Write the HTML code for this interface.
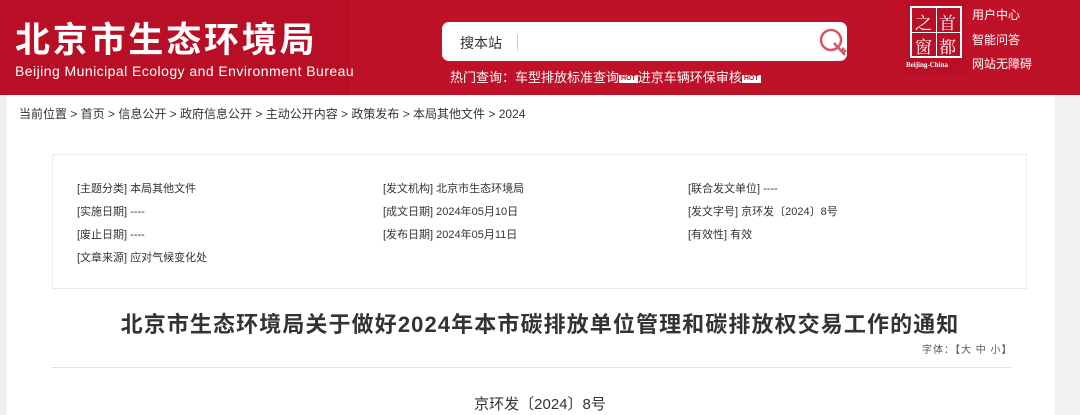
<!DOCTYPE html>
<html><head><meta charset="utf-8"><style>
*{margin:0;padding:0;box-sizing:border-box}
body{width:1080px;height:415px;overflow:hidden;background:#f1f1f1;font-family:"Liberation Sans","Noto Sans CJK SC",sans-serif;position:relative}
.hd{position:absolute;left:0;top:0;width:1080px;height:95px;background:#bf1229}
.hd .dark{position:absolute;left:0;top:0;width:350px;height:95px;background:#b90f26}
.t1{position:absolute;left:15px;top:12px;color:#fff;font-size:35px;font-weight:bold;letter-spacing:2.8px;white-space:nowrap}
.t2{position:absolute;left:15px;top:63px;color:#fff;font-size:14px;white-space:nowrap;letter-spacing:0.45px}
.sb{position:absolute;left:442px;top:22px;width:405px;height:39px;background:#fff;border-radius:7px}
.sb span{position:absolute;left:18px;top:11px;font-size:14px;color:#333}
.sb i{position:absolute;left:75px;top:12px;width:1px;height:17px;background:#ccc}
.hot{position:absolute;left:450px;top:67px;color:#fff;font-size:13px;white-space:nowrap}
.hot b{display:inline-block;background:#fff;color:#bf1229;font-size:7px;line-height:8px;padding:0 2px;vertical-align:middle;font-weight:bold}
.logo{position:absolute;left:905px;top:0;width:62px;height:75px;background:#b80f26}
.logo .bx{position:absolute;left:5px;top:6px;width:52px;height:52px;border:2px solid #fff}
.logo .bx span{position:absolute;color:#fff;font-size:17px;font-family:"Noto Serif CJK SC",serif;line-height:17px}
.logo .c{position:absolute;left:1px;top:61px;font-size:7px;color:#fff;font-family:"Liberation Serif",serif;font-weight:bold;white-space:nowrap}
.rl{position:absolute;left:972px;color:#fff;font-size:12px}
.main{position:absolute;left:7px;top:95px;width:1048px;height:320px;background:#fff}
.bc{position:absolute;left:19px;top:105px;font-size:12px;color:#333;white-space:nowrap}
.box{position:absolute;left:52px;top:154px;width:975px;height:135px;border:1px solid #ecebe4;background:#fff}
.box div{position:absolute;font-size:11px;color:#333;white-space:nowrap}
h1{position:absolute;left:0;width:1080px;text-align:center;top:307px;font-size:22px;color:#333;font-weight:bold;letter-spacing:1.1px}
.zt{position:absolute;left:922px;top:341px;font-size:10px;color:#555;letter-spacing:1px}
.dl{position:absolute;left:52px;top:367px;width:960px;border-top:1px dotted #ccc}
.wh{position:absolute;left:0;width:1080px;text-align:center;top:393px;font-size:15px;color:#333}
</style></head><body>
<div class="hd"><div class="dark"></div>
<div class="t1">北京市生态环境局</div>
<div class="t2">Beijing Municipal Ecology and Environment Bureau</div>
<div class="sb"><span>搜本站</span><i></i>
<svg style="position:absolute;left:375px;top:5px" width="34" height="32" viewBox="0 0 34 32"><circle cx="14" cy="13" r="10" fill="none" stroke="#d7576a" stroke-width="2.5"/><path d="M17 16 L28 28 M24 24 L27 21 M26 26 L29 23" stroke="#d7576a" stroke-width="2.5" fill="none"/></svg></div>
<div class="hot">热门查询：车型排放标准查询<b>HOT</b>进京车辆环保审核<b>HOT</b></div>
<div class="logo"><div class="bx"><span style="left:3px;top:5px">之</span><span style="left:27px;top:5px">首</span><span style="left:3px;top:29px">窗</span><span style="left:27px;top:29px">都</span>
<i style="position:absolute;left:24px;top:0;width:1px;height:48px;background:#fff"></i><i style="position:absolute;left:0;top:24px;width:48px;height:1px;background:#fff"></i></div>
<div class="c">Beijing-China</div></div>
<div class="rl" style="top:6px">用户中心</div>
<div class="rl" style="top:31px">智能问答</div>
<div class="rl" style="top:55px">网站无障碍</div>
</div>
<div class="main"></div>
<div class="bc">当前位置 &gt; 首页 &gt; 信息公开 &gt; 政府信息公开 &gt; 主动公开内容 &gt; 政策发布 &gt; 本局其他文件 &gt; 2024</div>
<div class="box">
<div style="left:24px;top:25px">[主题分类] 本局其他文件</div>
<div style="left:24px;top:48px">[实施日期] ----</div>
<div style="left:24px;top:71px">[废止日期] ----</div>
<div style="left:24px;top:94px">[文章来源] 应对气候变化处</div>
<div style="left:330px;top:25px">[发文机构] 北京市生态环境局</div>
<div style="left:330px;top:48px">[成文日期] 2024年05月10日</div>
<div style="left:330px;top:71px">[发布日期] 2024年05月11日</div>
<div style="left:635px;top:25px">[联合发文单位] ----</div>
<div style="left:635px;top:48px">[发文字号] 京环发〔2024〕8号</div>
<div style="left:635px;top:71px">[有效性] 有效</div>
</div>
<h1>北京市生态环境局关于做好2024年本市碳排放单位管理和碳排放权交易工作的通知</h1>
<div class="zt">字体：【大 中 小】</div>
<div class="dl"></div>
<div class="wh">京环发〔2024〕8号</div>
</body></html>
